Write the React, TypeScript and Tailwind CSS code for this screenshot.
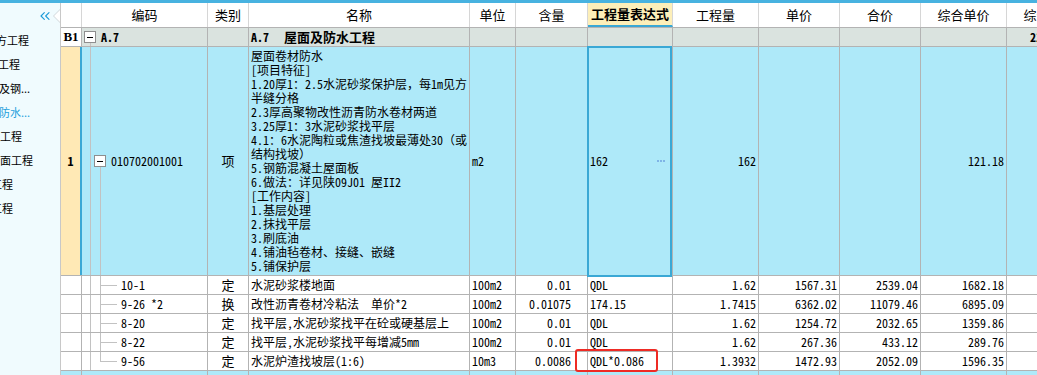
import { ChevronsLeft } from "lucide-react";
import clsx from "clsx";

const cols = [
  "w-[21px]",
  "w-[126px]",
  "w-[41px]",
  "w-[221px]",
  "w-[46px]",
  "w-[72px]",
  "w-[85px]",
  "w-[86px]",
  "w-[81px]",
  "w-[81px]",
  "w-[86px]",
  "w-[86px]",
];

const MONO =
  "font-['Noto_Sans_Mono_CJK_SC','Liberation_Mono','Noto_Sans_CJK_SC',monospace]";
const SANS = "font-['Noto_Sans_CJK_SC','Noto_Sans',sans-serif]";

const headers = ["", "编码", "类别", "名称", "单位", "含量", "工程量表达式", "工程量", "单价", "合价", "综合单价", "综合合价"];

const sideItems = [
  { text: "土石方工程", cls: "-ml-[26px]" },
  { text: "砌筑工程", cls: "-ml-[24px]" },
  { text: "混凝土及钢...", cls: "-ml-[34px]" },
  { text: "屋面及防水...", cls: "-ml-[34px] text-[#1fa0dc]" },
  { text: "保温工程", cls: "-ml-[22px]" },
  { text: "墙柱面工程", cls: "-ml-[22px]" },
  { text: "天棚工程", cls: "-ml-[31px]" },
  { text: "门窗工程", cls: "-ml-[31px]" },
];

const nameLines = [
  "屋面卷材防水",
  "[项目特征]",
  "1.20厚1：2.5水泥砂浆保护层，每1m见方",
  "半缝分格",
  "2.3厚高聚物改性沥青防水卷材两道",
  "3.25厚1：3水泥砂浆找平层",
  "4.1：6水泥陶粒或焦渣找坡最薄处30（或",
  "结构找坡）",
  "5.钢筋混凝土屋面板",
  "6.做法：详见陕09J01 屋II2",
  "[工作内容]",
  "1.基层处理",
  "2.抹找平层",
  "3.刷底油",
  "4.铺油毡卷材、接缝、嵌缝",
  "5.铺保护层",
];

const subs = [
  { code: "10-1", type: "定", name: "水泥砂浆楼地面", unit: "100m2", qty: "0.01", expr: "QDL", amt: "1.62", price: "1567.31", total: "2539.04", cprice: "1682.18" },
  { code: "9-26 *2", type: "换", name: "改性沥青卷材冷粘法  单价*2", unit: "100m2", qty: "0.01075", expr: "174.15", amt: "1.7415", price: "6362.02", total: "11079.46", cprice: "6895.09" },
  { code: "8-20", type: "定", name: "找平层,水泥砂浆找平在砼或硬基层上", unit: "100m2", qty: "0.01", expr: "QDL", amt: "1.62", price: "1254.72", total: "2032.65", cprice: "1359.86" },
  { code: "8-22", type: "定", name: "找平层,水泥砂浆找平每增减5mm", unit: "100m2", qty: "0.01", expr: "QDL", amt: "1.62", price: "267.36", total: "433.12", cprice: "289.76" },
  { code: "9-56", type: "定", name: "水泥炉渣找坡层(1:6)", unit: "10m3", qty: "0.0086", expr: "QDL*0.086", amt: "1.3932", price: "1472.93", total: "2052.09", cprice: "1596.35" },
];

const Cell = ({ i, className, children }: { i: number; className?: string; children?: React.ReactNode }) => (
  <div className={clsx("flex shrink-0 items-center overflow-hidden whitespace-pre border-r border-[#b3b3b3]", cols[i], className)}>
    {children}
  </div>
);

const Expander = () => (
  <span className="relative z-10 flex h-[12px] w-[12px] shrink-0 items-center justify-center border border-[#8e8e8e] bg-white">
    <span className="h-px w-[6px] bg-black" />
  </span>
);

export default function App() {
  return (
    <div className={clsx("flex h-[375px] w-[1037px] flex-col overflow-hidden bg-white text-[12px] text-black", MONO)}>
      <div className="h-[3px] shrink-0 bg-[#47b2e0]" />
      <div className="flex min-h-0 flex-1">
        {/* side tree */}
        <aside className={clsx("relative w-[61px] shrink-0 overflow-hidden border-r border-[#c8c8c8] bg-[#f0fbfe] text-[11px]", SANS)}>
          <div className="flex h-[25px] items-center justify-end pr-[7px] text-[#1c9bd8]">
            <ChevronsLeft size={16} strokeWidth={1.7} />
          </div>
          {sideItems.map((s) => (
            <div key={s.text} className="flex h-[24px] items-center whitespace-nowrap">
              <span className={s.cls}>{s.text}</span>
            </div>
          ))}
          <svg className="absolute right-[-1px] top-[5px]" width="8" height="16" viewBox="0 0 8 16">
            <polygon points="8,0.5 0.5,8 8,15.5" fill="#ffffff" stroke="#cfd6da" strokeWidth="1" />
          </svg>
        </aside>

        {/* grid */}
        <div className="min-w-0 flex-1 overflow-hidden">
          {/* header */}
          <div className={clsx("flex h-[25px] border-b border-[#b3b3b3] text-[13px]", SANS)}>
            {headers.map((h, i) => (
              <div
                key={i}
                className={clsx(
                  "flex shrink-0 items-center justify-center overflow-hidden whitespace-nowrap border-r border-[#d6d6d6]",
                  cols[i],
                  i === 6 && "border-b-2 border-b-[#3aa8d5] bg-[#fdefb9] font-bold"
                )}
              >
                {h}
              </div>
            ))}
          </div>

          {/* B1 row */}
          <div className="flex h-[19px] border-b border-[#b3b3b3] bg-[#dae3df] font-bold">
            <Cell i={0} className="justify-center bg-white font-['Liberation_Serif',serif] text-[13px]">B1</Cell>
            <Cell i={1} className="relative pl-[2px]">
              <span className="absolute bottom-0 left-[8px] top-1/2 w-px bg-[#c2c2c2]" />
              <Expander />
              <span className="ml-[5px]">A.7</span>
            </Cell>
            <Cell i={2} />
            <Cell i={3} className="pl-[2px]">
              <span>A.7</span>
              <span className={clsx("ml-[15px] text-[13px]", SANS)}>屋面及防水工程</span>
            </Cell>
            <Cell i={4} />
            <Cell i={5} />
            <Cell i={6} />
            <Cell i={7} />
            <Cell i={8} />
            <Cell i={9} />
            <Cell i={10} />
            <Cell i={11} className="pl-[23px]">21682.37</Cell>
          </div>

          {/* item row */}
          <div className="flex h-[229px] border-b border-[#b3b3b3] bg-[#aee9f9]">
            <Cell i={0} className="justify-center border-r-2 border-r-[#3aa8d5] bg-[#ffe9b5] font-bold">1</Cell>
            <Cell i={1} className="relative pl-[12px]">
              <span className="absolute bottom-0 left-[8px] top-0 w-px bg-[#c2c2c2]" />
              <span className="absolute bottom-0 left-[18px] top-1/2 w-px bg-[#c2c2c2]" />
              <Expander />
              <span className="ml-[5px]">010702001001</span>
            </Cell>
            <Cell i={2} className={clsx("justify-center text-[13px]", SANS)}>项</Cell>
            <div className={clsx("shrink-0 overflow-hidden whitespace-pre border-r border-[#b3b3b3] pl-[2px] pt-[2px] leading-[14px]", cols[3])}>
              {nameLines.map((l) => (
                <div key={l}>{l}</div>
              ))}
            </div>
            <Cell i={4} className="pl-[2px]">m2</Cell>
            <Cell i={5} />
            <div className={clsx("relative flex shrink-0 items-center justify-between border-r border-[#b3b3b3] pl-[2px] pr-[7px]", cols[6])}>
              <span className="pointer-events-none absolute -bottom-[2px] -left-[1px] -top-[1px] right-0 z-10 border-2 border-[#3aa8d5]" />
              <span>162</span>
              <span className="flex gap-[1px]">
                <span className="h-[2px] w-[2px] bg-[#7fb4e6]" />
                <span className="h-[2px] w-[2px] bg-[#7fb4e6]" />
                <span className="h-[2px] w-[2px] bg-[#7fb4e6]" />
              </span>
            </div>
            <Cell i={7} className="justify-end pr-[2px]">162</Cell>
            <Cell i={8} />
            <Cell i={9} />
            <Cell i={10} className="justify-end pr-[2px]">121.18</Cell>
            <Cell i={11} />
          </div>

          {/* quota rows */}
          {subs.map((s, idx) => {
            const last = idx === subs.length - 1;
            return (
              <div key={s.code} className="flex h-[19px] border-b border-[#b3b3b3] bg-white">
                <Cell i={0} />
                <Cell i={1} className="relative pl-[39px]">
                  <span className="absolute bottom-0 left-[8px] top-0 w-px bg-[#c2c2c2]" />
                  <span className={clsx("absolute left-[18px] top-0 w-px bg-[#c2c2c2]", last ? "h-1/2" : "bottom-0")} />
                  <span className="absolute left-[18px] top-1/2 h-px w-[17px] bg-[#c2c2c2]" />
                  {s.code}
                </Cell>
                <Cell i={2} className={clsx("justify-center text-[13px]", SANS)}>{s.type}</Cell>
                <Cell i={3} className="pl-[2px]">{s.name}</Cell>
                <Cell i={4} className="pl-[2px]">{s.unit}</Cell>
                <Cell i={5} className="justify-end pr-[16px]">{s.qty}</Cell>
                <div className={clsx("relative flex shrink-0 items-center border-r border-[#b3b3b3] pl-[2px]", cols[6])}>
                  {last && (
                    <span className="pointer-events-none absolute -left-[13px] -top-[3px] z-10 h-[23px] w-[83px] rounded-[3px] border-2 border-[#ee2b25]" />
                  )}
                  <span className="whitespace-nowrap">{s.expr}</span>
                </div>
                <Cell i={7} className="justify-end pr-[2px]">{s.amt}</Cell>
                <Cell i={8} className="justify-end pr-[2px]">{s.price}</Cell>
                <Cell i={9} className="justify-end pr-[2px]">{s.total}</Cell>
                <Cell i={10} className="justify-end pr-[2px]">{s.cprice}</Cell>
                <Cell i={11} />
              </div>
            );
          })}

          {/* next item row, cut off */}
          <div className="flex h-[19px] bg-[#aee9f9]">
            {cols.map((_, i) => (
              <Cell key={i} i={i} />
            ))}
          </div>
        </div>
      </div>
    </div>
  );
}
